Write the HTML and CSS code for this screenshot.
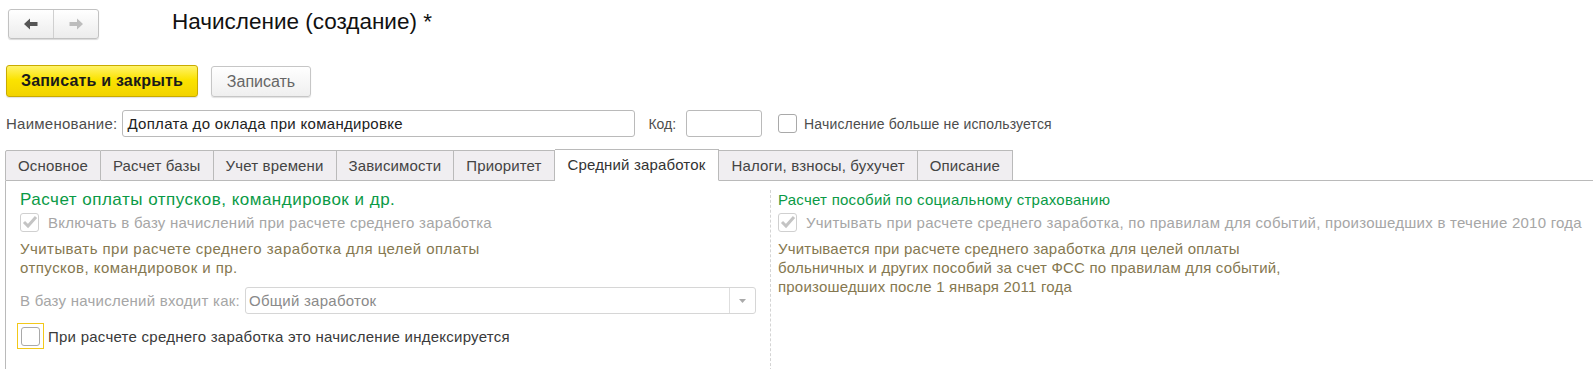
FILE: index.html
```html
<!doctype html>
<html>
  <head>
    <title>Начисление (создание)</title>
    <link rel="stylesheet" href="styles.css">
  </head>
  <body>
    <header class="head">
      <div class="nav">
        <button class="nav-btn" type="button">
          <svg width="14" height="12" viewBox="0 0 14 12"><path d="M0 6 L6 0.5 L6 4 L13.5 4 L13.5 8 L6 8 L6 11.5 Z" fill="#555"/></svg>
        </button>
        <button class="nav-btn" type="button">
          <svg width="14" height="12" viewBox="0 0 14 12"><path d="M14 6 L8 0.5 L8 4 L0.5 4 L0.5 8 L8 8 L8 11.5 Z" fill="#bdbdbd"/></svg>
        </button>
      </div>
      <h1 class="title">Начисление (создание) *</h1>
    </header>

    <div class="toolbar">
      <button class="btn btn-main" type="button">Записать и закрыть</button>
      <button class="btn" type="button">Записать</button>
    </div>

    <div class="fields">
      <label class="lbl">Наименование:</label>
      <div class="input input-name">Доплата до оклада при командировке</div>
      <label class="lbl lbl-code">Код:</label>
      <div class="input input-code"></div>
      <span class="check"></span>
      <span class="lbl lbl-check">Начисление больше не используется</span>
    </div>

    <nav class="tabs">
      <span class="tab">Основное</span>
      <span class="tab">Расчет базы</span>
      <span class="tab">Учет времени</span>
      <span class="tab">Зависимости</span>
      <span class="tab">Приоритет</span>
      <span class="tab active">Средний заработок</span>
      <span class="tab">Налоги, взносы, бухучет</span>
      <span class="tab">Описание</span>
      <span class="tab-rest"></span>
    </nav>

    <section class="panel">
      <div class="col col-left">
        <div class="group-title">Расчет оплаты отпусков, командировок и др.</div>
        <div class="check-row">
          <span class="check checked"><svg width="16" height="14" viewBox="0 0 16 14"><path d="M2 7 L6 11 L14 2" fill="none" stroke="#c4c4c4" stroke-width="3"/></svg></span>
          <span class="muted">Включать в базу начислений при расчете среднего заработка</span>
        </div>
        <p class="note">Учитывать при расчете среднего заработка для целей оплаты<br>отпусков, командировок и пр.</p>
        <div class="select-row">
          <span class="muted">В базу начислений входит как:</span>
          <div class="select">
            <span class="select-val">Общий заработок</span>
            <span class="select-btn"><svg width="7" height="4" viewBox="0 0 7 4"><path d="M0 0 L7 0 L3.5 4 Z" fill="#aaa"/></svg></span>
          </div>
        </div>
        <div class="check-row focus-row">
          <span class="focus"><span class="check"></span></span>
          <span class="text">При расчете среднего заработка это начисление индексируется</span>
        </div>
      </div>
      <div class="col col-right">
        <div class="group-title">Расчет пособий по социальному страхованию</div>
        <div class="check-row">
          <span class="check checked"><svg width="16" height="14" viewBox="0 0 16 14"><path d="M2 7 L6 11 L14 2" fill="none" stroke="#c4c4c4" stroke-width="3"/></svg></span>
          <span class="muted">Учитывать при расчете среднего заработка, по правилам для событий, произошедших в течение 2010 года</span>
        </div>
        <p class="note">Учитывается при расчете среднего заработка для целей оплаты<br>больничных и других пособий за счет ФСС по правилам для событий,<br>произошедших после 1 января 2011 года</p>
      </div>
    </section>
  </body>
</html>
```

FILE: styles.css
```css
:root {
  --text-color: #333;
  --label-color: #4d4d4d;
  --border-color: #bababa;
  --tab-bg: #f0eef1;
  --green: #0a9a46;
  --note: #857850;
  --muted: #a6a6a6;
}

body {
  margin: 0;
  font-family: "Liberation Sans", Arial, sans-serif;
  font-size: 15px;
  letter-spacing: 0.25px;
  color: var(--text-color);
  background: white;
  height: 369px;
  overflow: hidden;
}

button {
  font-family: inherit;
}

.head {
  display: flex;
  align-items: center;
  padding: 9px 0 0 8px;
  height: 30px;
}

.nav {
  display: flex;
  width: 91px;
  height: 30px;
  box-sizing: border-box;
  border: 1px solid #c2c2c2;
  border-radius: 3px;
  background: linear-gradient(#ffffff, #ececec);
  box-shadow: 0 1px 1px rgba(0, 0, 0, 0.15);
}

.nav-btn {
  flex: 1;
  border: none;
  background: none;
  padding: 0;
  display: flex;
  align-items: center;
  justify-content: center;
}

.nav-btn + .nav-btn {
  border-left: 1px solid #d0d0d0;
}

.title {
  margin: 0 0 0 73px;
  font-size: 22.5px;
  letter-spacing: 0;
  font-weight: normal;
  color: #111;
  line-height: 30px;
  padding-bottom: 4px;
}

.toolbar {
  display: flex;
  gap: 13px;
  padding: 26px 0 0 6px;
}

.btn {
  height: 31px;
  width: 100px;
  margin-top: 1px;
  border: 1px solid #c6c6c6;
  border-radius: 3px;
  background: linear-gradient(#ffffff, #efefef);
  box-shadow: 0 1px 1px rgba(0, 0, 0, 0.12);
  color: #666;
  font-size: 16px;
  letter-spacing: 0;
  padding: 0;
}

.btn-main {
  width: 192px;
  height: 32px;
  margin-top: 0;
  border-color: #c9ab00;
  background: linear-gradient(#fff36a, #fbe300 45%, #f2d300);
  color: #1a1a1a;
  font-weight: bold;
  letter-spacing: 0.2px;
}

.fields {
  display: flex;
  align-items: center;
  padding: 13px 0 0 6px;
  height: 27px;
}

.lbl {
  color: var(--label-color);
  white-space: nowrap;
}

.input {
  box-sizing: border-box;
  height: 27px;
  border: 1px solid var(--border-color);
  border-radius: 3px;
  padding: 0 4px;
  line-height: 25px;
  color: #222;
  background: white;
}

.input-name {
  width: 513px;
  margin-left: 5px;
  letter-spacing: 0.3px;
}

.lbl-code {
  margin: 0 10px 0 13px;
  font-size: 14px;
  letter-spacing: 0;
}

.input-code {
  width: 76px;
  margin-right: 16px;
}

.lbl-check {
  font-size: 14px;
  letter-spacing: 0.15px;
}

.check {
  display: inline-flex;
  align-items: center;
  justify-content: center;
  box-sizing: border-box;
  width: 19px;
  height: 19px;
  border: 1px solid #a9a9a9;
  border-radius: 3px;
  background: white;
  margin-right: 7px;
  flex: none;
}

.check.checked {
  border-color: #d0d0d0;
}

.tabs {
  display: flex;
  align-items: flex-end;
  margin: 12px 0 0 5px;
  height: 32px;
  letter-spacing: 0.15px;
}

.tab {
  box-sizing: border-box;
  height: 31px;
  line-height: 30px;
  padding: 0 12px;
  background: var(--tab-bg);
  border: 1px solid var(--border-color);
  border-left: none;
  color: #444;
  white-space: nowrap;
}

.tab:first-child {
  border-left: 1px solid var(--border-color);
  border-top-left-radius: 2px;
}

.tab.active {
  height: 32px;
  padding: 0 13px;
  background: white;
  border-bottom-color: white;
  color: #333;
}

.tab-rest {
  flex: 1;
  border-bottom: 1px solid var(--border-color);
}

.panel {
  display: flex;
  margin-left: 5px;
  border-left: 1px solid var(--border-color);
  height: 190px;
}

.col {
  padding-top: 9px;
}

.col-left {
  box-sizing: border-box;
  width: 764px;
  padding-left: 14px;
  padding-right: 14px;
}

.col-right {
  flex: 1;
  margin-top: 9px;
  padding-top: 0;
  padding-left: 7px;
  border-left: 1px dashed #d4d4d4;
}

.group-title {
  color: var(--green);
  font-size: 17px;
  letter-spacing: 0.5px;
  line-height: 20px;
  white-space: nowrap;
}

.col-right .group-title {
  font-size: 15px;
  letter-spacing: 0.25px;
}

.check-row {
  display: flex;
  align-items: center;
  height: 20px;
  margin-top: 2px;
}

.check-row .check {
  margin-right: 9px;
}

.muted {
  color: var(--muted);
  white-space: nowrap;
}

.note {
  margin: 7px 0 0;
  color: var(--note);
  line-height: 19px;
  letter-spacing: 0.45px;
  white-space: nowrap;
}

.col-right .note {
  letter-spacing: 0.2px;
}

.select-row {
  display: flex;
  align-items: center;
  margin-top: 10px;
  gap: 5px;
}

.select {
  flex: 1;
  display: flex;
  box-sizing: border-box;
  height: 27px;
  border: 1px solid #d6d6d6;
  border-radius: 3px;
}

.select-val {
  flex: 1;
  padding-left: 3px;
  line-height: 25px;
  color: #8a8a8a;
}

.select-btn {
  width: 25px;
  border-left: 1px solid #dedede;
  display: flex;
  align-items: center;
  justify-content: center;
}

.focus-row {
  height: 26px;
  margin-top: 9px;
  margin-left: -3px;
}

.focus {
  box-sizing: border-box;
  width: 27px;
  height: 26px;
  border: 1px solid #f2c81a;
  display: flex;
  align-items: center;
  justify-content: center;
  margin-right: 4px;
}

.focus .check {
  margin: 0;
}

.focus-row .text {
  color: #3a3a3a;
}
```
